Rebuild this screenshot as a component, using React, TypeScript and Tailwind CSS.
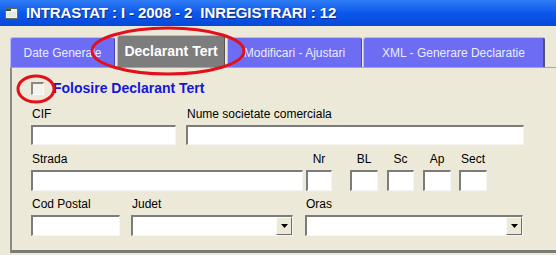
import React from 'react'

const font = { fontFamily: '"Liberation Sans", Arial, sans-serif' }

function TextBox({ w, h = 20 }: { w: number; h?: number }) {
  return (
    <div
      className="bg-white border-t-2 border-l-2 border-b border-r border-t-[#7c7c7c] border-l-[#7c7c7c] border-b-[#f6f5f0] border-r-[#f6f5f0]"
      style={{ width: w, height: h }}
    />
  )
}

function Combo({ w, h = 21 }: { w: number; h?: number }) {
  return (
    <div
      className="bg-white border-t-2 border-l-2 border-b border-r border-t-[#7c7c7c] border-l-[#7c7c7c] border-b-[#f6f5f0] border-r-[#f6f5f0] flex justify-end"
      style={{ width: w, height: h }}
    >
      <div className="w-[16px] h-full bg-[#ece9d8] border-t border-l border-b border-r border-t-[#fbfbf8] border-l-[#fbfbf8] border-b-[#6e6e6e] border-r-[#6e6e6e] flex items-center justify-center">
        <svg width="7" height="4" viewBox="0 0 7 4">
          <path d="M0 0h7L3.5 4z" fill="#000" />
        </svg>
      </div>
    </div>
  )
}

function Field({
  label,
  w,
  center,
  combo,
  h,
  ml = 0,
}: {
  label: string
  w: number
  center?: boolean
  combo?: boolean
  h?: number
  ml?: number
}) {
  return (
    <div className="flex flex-col" style={{ width: w, marginLeft: ml }}>
      <div
        className={`h-[14px] leading-[14px] text-[12px] text-black whitespace-nowrap ${
          center ? 'text-center' : 'pl-[1px]'
        }`}
      >
        {label}
      </div>
      <div className="mt-[4px]">{combo ? <Combo w={w} h={h} /> : <TextBox w={w} h={h} />}</div>
    </div>
  )
}

const tabBase =
  'flex items-center justify-center text-[12px] whitespace-nowrap rounded-t-[3px] border-t border-l border-r'

export default function App() {
  return (
    <div className="relative w-[556px] h-[255px] overflow-hidden bg-[#ece9d8]" style={font}>
      {/* title bar */}
      <div className="h-[26px] flex items-center bg-gradient-to-b from-[#2f7cf6] via-[#0b58ec] to-[#0649d8] pl-[5px]">
        <svg width="13" height="12" viewBox="0 0 13 12" className="mr-[8px]">
          <rect x="0.5" y="1.5" width="12" height="10" fill="#f2f2ec" stroke="#5c6a5c" />
          <rect x="1" y="2" width="5" height="2" fill="#40503f" />
          <rect x="2" y="5" width="9" height="5" fill="#dfe9df" />
        </svg>
        <span
          className="text-white font-bold text-[15px] tracking-[-0.1px]"
          style={{ textShadow: '1px 1px 0 #0a2a90' }}
        >
          INTRASTAT : I - 2008 - 2&nbsp;&nbsp;INREGISTRARI : 12
        </span>
      </div>

      {/* tabs */}
      <div className="flex items-end mt-[9px] ml-[10px] h-[32px]">
        <div className={`${tabBase} w-[105px] h-[30px] bg-[#6d6df3] text-[#ececff] border-t-[#b9b9fb] border-l-[#b9b9fb] border-r-[#4848b0]`}>
          Date Generale
        </div>
        <div className={`${tabBase} ml-[2px] w-[108px] h-[32px] bg-[#7d7d7d] text-white font-bold text-[14px] border-t-[#bdbdbd] border-l-[#bdbdbd] border-r-[#555]`}>
          Declarant Tert
        </div>
        <div className={`${tabBase} ml-[2px] w-[135px] h-[30px] bg-[#6d6df3] text-[#ececff] border-t-[#b9b9fb] border-l-[#b9b9fb] border-r-[#4848b0]`}>
          Modificari - Ajustari
        </div>
        <div className={`${tabBase} ml-[1px] w-[182px] h-[30px] bg-[#6d6df3] text-[#ececff] border-t-[#b9b9fb] border-l-[#b9b9fb] border-r-2 border-r-[#505070]`}>
          XML - Generare Declaratie
        </div>
      </div>

      {/* panel */}
      <div className="ml-[10px] w-[560px] h-[186px] border-t border-t-[#a8a8a0] border-l-2 border-l-[#8a8a86] border-b-[3px] border-b-[#7a7a76] pl-[19px] pt-[14px]">
        <div className="flex items-center h-[13px]">
          <div className="w-[13px] h-[13px] bg-[#f3f2ee] border-t-2 border-l-2 border-b border-r border-t-[#8a8a8a] border-l-[#8a8a8a] border-b-[#fafafa] border-r-[#fafafa]" />
          <span className="ml-[9px] text-[14px] font-bold text-[#1616d8]">Folosire Declarant Tert</span>
        </div>

        <div className="flex mt-[12px]">
          <Field label="CIF" w={145} />
          <Field label="Nume societate comerciala" w={338} ml={10} />
        </div>

        <div className="flex mt-[7px]">
          <Field label="Strada" w={272} h={21} />
          <Field label="Nr" w={26} h={21} center ml={3} />
          <Field label="BL" w={28} h={21} center ml={18} />
          <Field label="Sc" w={27} h={21} center ml={9} />
          <Field label="Ap" w={28} h={21} center ml={9} />
          <Field label="Sect" w={28} h={21} center ml={8} />
        </div>

        <div className="flex mt-[6px]">
          <Field label="Cod Postal" w={89} h={21} />
          <Field label="Judet" w={162} h={21} combo ml={11} />
          <Field label="Oras" w={218} h={21} combo ml={12} />
        </div>
      </div>

      {/* red highlight marks */}
      <svg className="absolute inset-0 pointer-events-none" width="556" height="255">
        <ellipse cx="168" cy="51" rx="76" ry="23" fill="none" stroke="#e3101c" strokeWidth="3" />
        <ellipse cx="36" cy="89" rx="18" ry="13" fill="none" stroke="#e3101c" strokeWidth="3" />
      </svg>
    </div>
  )
}
